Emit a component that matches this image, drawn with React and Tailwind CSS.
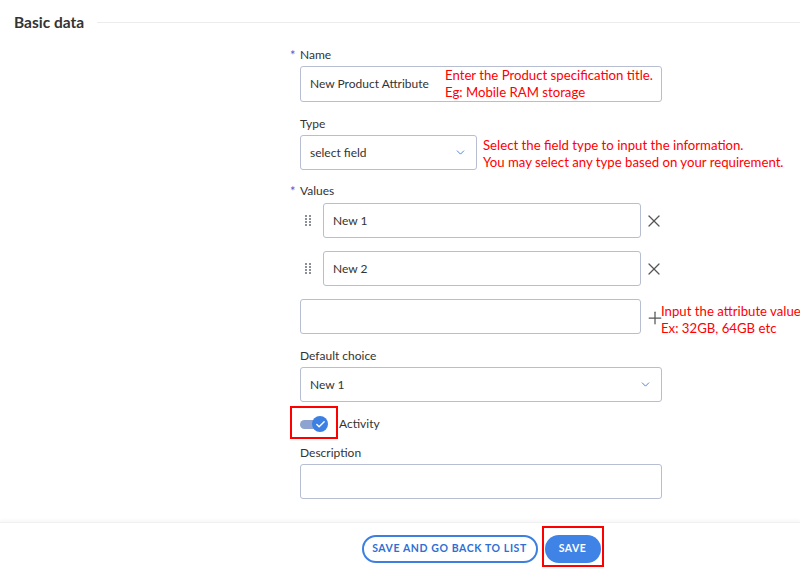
import { X, Plus, ChevronDown, Check } from "lucide-react";

const font = { fontFamily: "Lato, 'Noto Sans', sans-serif" };

// Small red note placed over the form, as in the annotated screenshot
function Note({ className, lines }) {
  return (
    <div className={`absolute text-[13.2px] leading-[17px] text-[#ff0000] whitespace-nowrap ${className}`}>
      {lines.map((l) => (
        <div key={l}>{l}</div>
      ))}
    </div>
  );
}

function Label({ children, required }) {
  return (
    <div className="relative h-4 mb-1 text-[12px] leading-[17px] text-[#333]">
      {required && <span className="absolute -left-[10px] top-[1px] text-[13px] text-[#4a62c8]">*</span>}
      {children}
    </div>
  );
}

function DragHandle() {
  return (
    <div className="w-[23px] shrink-0 flex justify-start pl-[5px]">
      <div className="grid grid-cols-2 gap-x-[2px] gap-y-[1px]">
        {Array.from({ length: 8 }).map((_, i) => (
          <span key={i} className="w-[2px] h-[2px] bg-[#8a8f99]" />
        ))}
      </div>
    </div>
  );
}

export default function App() {
  return (
    <div className="w-[800px] h-[571px] bg-white flex flex-col overflow-hidden" style={font}>
      {/* Section header */}
      <div className="flex items-center pt-[13px] pl-[14px] h-[31px]">
        <h2 className="text-[15.5px] font-bold text-[#333] leading-[18px]">Basic data</h2>
        <div className="flex-1 h-px bg-[#ececec] ml-[13px]" />
      </div>

      {/* Form */}
      <div className="grid grid-cols-[300px_362px] flex-1">
        <div />
        <div className="flex flex-col pt-[15px]">
          <Label required>Name</Label>
          <div className="relative h-9 border border-[#b7bed2] rounded-[3px] flex items-center px-[9px] text-[12px] text-[#333]">
            New Product Attribute
            <Note className="left-[144px] top-[0px]" lines={["Enter the Product specification title.", "Eg: Mobile RAM storage"]} />
          </div>

          <div className="mt-[13px]">
            <Label>Type</Label>
            <div className="relative w-[177px] h-[35px] border border-[#b7bed2] rounded-[3px] flex items-center justify-between px-[9px] text-[12px] text-[#333]">
              select field
              <ChevronDown size={13} strokeWidth={1.8} className="text-[#4d7fdc]" />
              <Note className="left-[182px] top-[1px]" lines={["Select the field type to input the information.", "You may select any type based on your requirement."]} />
            </div>
          </div>

          <div className="mt-[12px]">
            <Label required>Values</Label>
            <div className="flex items-center mt-[5px]">
              <DragHandle />
              <div className="w-[318px] shrink-0 h-[35px] border border-[#b7bed2] rounded-[3px] flex items-center px-[9px] text-[12px] text-[#333]">New 1</div>
              <X size={20} strokeWidth={1.5} className="shrink-0 ml-[3px] text-[#555]" />
            </div>
            <div className="flex items-center mt-[13px]">
              <DragHandle />
              <div className="w-[318px] shrink-0 h-[35px] border border-[#b7bed2] rounded-[3px] flex items-center px-[9px] text-[12px] text-[#333]">New 2</div>
              <X size={20} strokeWidth={1.5} className="shrink-0 ml-[3px] text-[#555]" />
            </div>
            <div className="relative flex items-center mt-[13px]">
              <div className="w-[341px] shrink-0 h-[35px] border border-[#b7bed2] rounded-[3px]" />
              <Plus size={20} strokeWidth={1.5} className="shrink-0 ml-[4px] mt-[3px] text-[#555]" />
              <Note className="left-[361px] top-[4px]" lines={["Input the attribute value", "Ex: 32GB, 64GB etc"]} />
            </div>
          </div>

          <div className="mt-[13px]">
            <Label>Default choice</Label>
            <div className="h-[35px] border border-[#b7bed2] rounded-[3px] flex items-center justify-between px-[9px] text-[12px] text-[#333]">
              New 1
              <ChevronDown size={13} strokeWidth={1.8} className="text-[#4d7fdc]" />
            </div>
          </div>

          {/* Activity toggle */}
          <div className="flex items-center h-5 mt-[12px]">
            <div className="relative w-[28px] h-5 flex items-center">
              <div className="w-[22px] h-[9px] rounded-full bg-[#8ea3cf]" />
              <div className="absolute left-[12px] w-4 h-4 rounded-full bg-[#3d80e3] flex items-center justify-center">
                <Check size={11} strokeWidth={3} className="text-white" />
              </div>
              <div className="absolute -left-[10px] -top-[8px] w-[48px] h-[33px] border-2 border-[#ff0000]" />
            </div>
            <span className="ml-[11px] text-[12px] text-[#333]">Activity</span>
          </div>

          <div className="mt-[10px]">
            <Label>Description</Label>
            <div className="h-[35px] border border-[#b7bed2] rounded-[3px]" />
          </div>
        </div>
      </div>

      {/* Footer actions */}
      <div className="h-[49px] border-t border-[#f0f0f0] shadow-[0_-2px_3px_rgba(0,0,0,0.03)] grid grid-cols-[300px_362px]">
        <div />
        <div className="flex items-center justify-center gap-[7px] pt-[3px]">
          <button className="h-[28px] w-[176px] rounded-full border-2 border-[#3d7fe0] text-[#2f6fd3] text-[10.5px] font-bold tracking-[0.6px] bg-white">
            SAVE AND GO BACK TO LIST
          </button>
          <div className="relative">
            <button className="h-[28px] w-[56px] rounded-full bg-[#3e83e5] text-white text-[10.5px] font-bold tracking-[0.5px]">
              SAVE
            </button>
            <div className="absolute -left-[3px] -right-[3px] -top-[8px] -bottom-[4px] border-2 border-[#ff0000]" />
          </div>
        </div>
      </div>
    </div>
  );
}
